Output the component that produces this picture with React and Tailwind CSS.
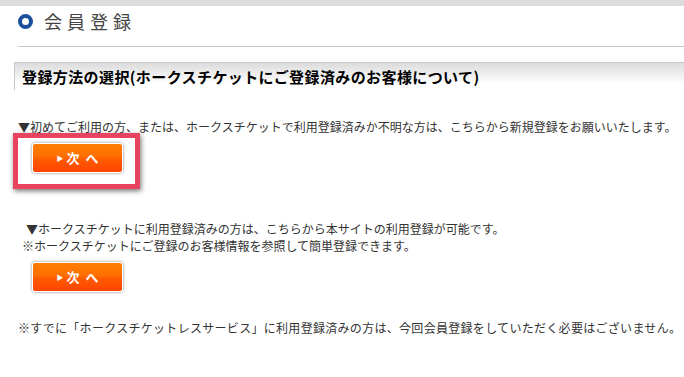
import React from "react";

const jp = "font-['Noto_Sans_CJK_JP','Noto_Sans',sans-serif]";

const NextButton = ({ highlighted }) => (
  <div className="relative ml-[32px] w-[91px] h-[30px]">
    {highlighted && (
      <div className="absolute -left-[19px] -top-[10px] -right-[17px] -bottom-[16px] border-[5px] border-[#e8435f] shadow-[1px_2px_5px_rgba(0,0,0,0.55)]"></div>
    )}
    <button className="w-full h-full rounded-[3px] border border-white bg-[linear-gradient(to_bottom,#ff7d00_0%,#ff7000_42%,#ff5a00_56%,#ff4400_100%)] shadow-[0_0_3px_rgba(0,0,0,0.5)] flex items-center justify-center text-white text-[13px] font-bold">
      <span className="text-[7px] mr-[3px]">▶</span>
      <span>次</span>
      <span className="ml-[6px]">へ</span>
    </button>
  </div>
);

export default function App() {
  return (
    <div className={`w-full h-[377px] bg-white overflow-hidden text-[#333] ${jp}`}>
      <div className="h-[6px] bg-[#dcdcdc]"></div>

      {/* title */}
      <div className="flex items-center h-[30px] pl-[18px]">
        <div className="w-[15px] h-[15px] rounded-full border-[4px] border-[#1c4f9c]"></div>
        <h1 className="ml-[11px] text-[18px] leading-none tracking-[5px] text-[#444]">会員登録</h1>
      </div>
      <div className="ml-[18px] mt-[10px] border-t border-[#c8c8c8]"></div>

      {/* section heading */}
      <div className="ml-[14px] mt-[15px] h-[28px] border-l border-t border-[#c8c8c8] bg-[linear-gradient(to_bottom,#dcdcdc_0%,#f2f2f2_50%,#ffffff_75%)] flex items-center pl-[7px]">
        <h2 className="text-[15px] font-bold text-black leading-none tracking-[0.4px]">
          登録方法の選択(ホークスチケットにご登録済みのお客様について)
        </h2>
      </div>

      <p className="mt-[29px] pl-[18px] text-[12px] leading-[16px] whitespace-nowrap">
        ▼初めてご利用の方、または、ホークスチケットで利用登録済みか不明な方は、こちらから新規登録をお願いいたします。
      </p>
      <div className="mt-[8px]">
        <NextButton highlighted />
      </div>

      <p className="mt-[47px] pl-[26px] text-[12px] leading-[17px]">
        ▼ホークスチケットに利用登録済みの方は、こちらから本サイトの利用登録が可能です。
      </p>
      <p className="pl-[22px] text-[12px] leading-[17px]">
        ※ホークスチケットにご登録のお客様情報を参照して簡単登録できます。
      </p>
      <div className="mt-[8px]">
        <NextButton />
      </div>

      <p className="mt-[27px] pl-[18px] text-[12px] leading-[17px] tracking-[0.3px] whitespace-nowrap">
        ※すでに「ホークスチケットレスサービス」に利用登録済みの方は、今回会員登録をしていただく必要はございません。
      </p>
    </div>
  );
}
